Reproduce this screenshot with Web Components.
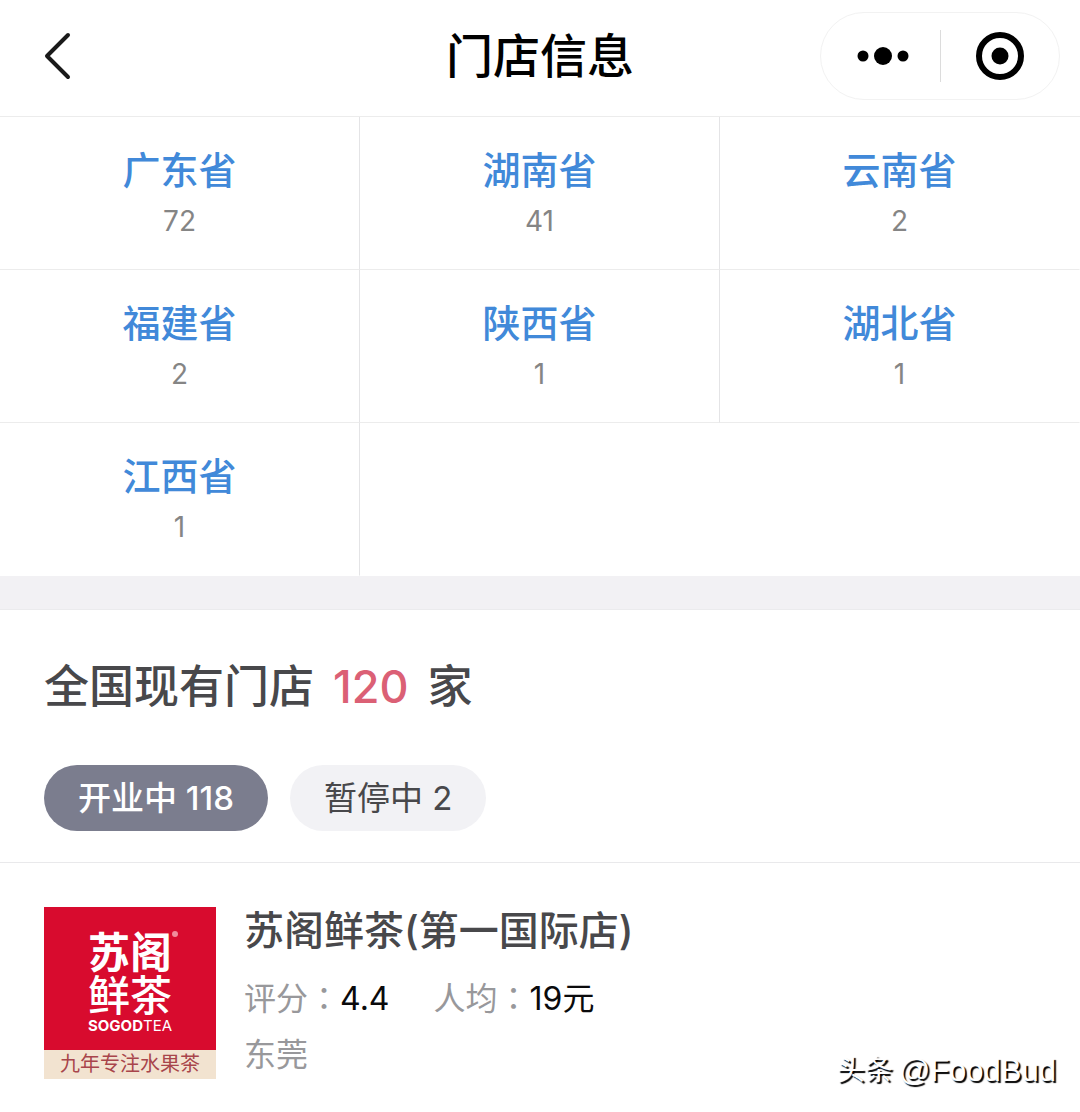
<!DOCTYPE html>
<html lang="zh-CN">
<head>
<meta charset="utf-8">
<meta name="viewport" content="width=device-width, initial-scale=1">
<title>门店信息</title>
<style>
  body {
    margin: 0;
    background: #fff;
    color: #48484b;
    font-family: Inter, "Noto Sans CJK SC", sans-serif;
  }
</style>
</head>
<body>
<store-page>
  <nav-bar slot="header">门店信息</nav-bar>
  <province-grid slot="provinces">
    <province-cell count="72">广东省</province-cell>
    <province-cell count="41">湖南省</province-cell>
    <province-cell count="2">云南省</province-cell>
    <province-cell count="2">福建省</province-cell>
    <province-cell count="1">陕西省</province-cell>
    <province-cell count="1">湖北省</province-cell>
    <province-cell count="1">江西省</province-cell>
  </province-grid>
  <store-summary total="120">
    <filter-pill active>开业中 118</filter-pill>
    <filter-pill>暂停中 2</filter-pill>
  </store-summary>
  <store-card score="4.4" price="19元" city="东莞">
    <brand-logo slot="logo"></brand-logo>
    苏阁鲜茶(第一国际店)
  </store-card>
  <water-mark slot="mark" source="头条">@FoodBud</water-mark>
</store-page>

<script>
function define(name, render) {
  customElements.define(name, class extends HTMLElement {
    constructor() {
      super();
      this.attachShadow({mode: 'open'});
    }
    connectedCallback() {
      this.shadowRoot.innerHTML = render(this);
    }
  });
}

define('store-page', () => `
  <style>
    :host { display: block; position: relative; }
    .band { height: 33px; background: #f2f1f4; border-bottom: 1px solid #ebebed; }
  </style>
  <slot name="header"></slot>
  <slot name="provinces"></slot>
  <div class="band"></div>
  <main><slot></slot></main>
  <slot name="mark"></slot>`);

define('nav-bar', () => `
  <style>
    :host {
      display: grid;
      grid-template-columns: 1fr auto 1fr;
      align-items: center;
      height: 117px;
      box-sizing: border-box;
      padding: 0 20px 5px;
      border-bottom: 1px solid #ececec;
    }
    h1 { margin: 0; font-size: 47px; line-height: 66px; font-weight: 500; color: #000; }
    button { display: flex; align-items: center; justify-content: center; border: 0; padding: 0; background: none; }
    .back { justify-self: start; padding: 0 24px; }
    .capsule {
      justify-self: end;
      display: flex;
      align-items: center;
      width: 240px;
      height: 88px;
      box-sizing: border-box;
      border: 1px solid #f2f2f2;
      border-radius: 44px;
    }
    .capsule button { flex: 1; height: 100%; }
    .more svg { margin-left: 6px; }
    .line { width: 1px; height: 52px; background: #dcdcdc; }
    svg { display: block; }
  </style>
  <button class="back" aria-label="返回">
    <svg width="28" height="48" viewBox="0 0 28 48" fill="none" stroke="#1a1a1a" stroke-width="4" stroke-linecap="round" stroke-linejoin="round"><path d="M24 3 L3 24 L24 45"/></svg>
  </button>
  <h1><slot></slot></h1>
  <div class="capsule">
    <button class="more" aria-label="更多">
      <svg width="54" height="20" viewBox="0 0 54 20"><circle cx="7" cy="10" r="5.5"/><circle cx="27" cy="10" r="9"/><circle cx="47" cy="10" r="5.5"/></svg>
    </button>
    <span class="line"></span>
    <button aria-label="关闭">
      <svg width="50" height="50" viewBox="0 0 50 50"><circle cx="25" cy="25" r="21" fill="none" stroke="#000" stroke-width="6"/><circle cx="25" cy="25" r="8.5"/></svg>
    </button>
  </div>`);

define('province-grid', () => `
  <style>
    :host { display: grid; grid-template-columns: repeat(3, 1fr); }
    ::slotted(*) { border-bottom: 1px solid #ececec; }
    ::slotted(:nth-child(3n)) { --divider: transparent; }
    ::slotted(:last-child) { border-bottom-color: transparent; }
  </style>
  <slot></slot>`);

define('province-cell', el => `
  <style>
    :host { display: block; border-right: 1px solid var(--divider, #e4e4e6); }
    a {
      display: flex;
      flex-direction: column;
      align-items: center;
      gap: 8px;
      padding: 28px 0 30px;
      text-decoration: none;
    }
    .name { font-size: 38px; line-height: 50px; font-weight: 500; color: #4189d9; }
    .count { font-size: 28px; line-height: 36px; color: #858585; }
  </style>
  <a href="#"><span class="name"><slot></slot></span><span class="count">${el.getAttribute('count')}</span></a>`);

define('store-summary', el => `
  <style>
    :host { display: block; padding: 44px 44px 31px; border-bottom: 1px solid #e9e9eb; }
    h2 {
      display: flex;
      gap: 19px;
      margin: 0 0 45px;
      font-size: 45px;
      line-height: 66px;
      font-weight: 500;
    }
    strong { font-weight: 500; color: #db6075; }
    .filters { display: flex; gap: 22px; }
  </style>
  <h2><span>全国现有门店</span><strong>${el.getAttribute('total')}</strong><span>家</span></h2>
  <div class="filters"><slot></slot></div>`);

define('filter-pill', () => `
  <style>
    :host { display: block; }
    button {
      display: block;
      height: 66px;
      padding: 0 34px;
      border: 0;
      border-radius: 33px;
      background: #f2f2f5;
      color: #48484b;
      font: inherit;
      font-size: 33px;
      line-height: 66px;
    }
    :host([active]) button { background: #7b7d8e; color: #fff; font-weight: 500; }
  </style>
  <button><slot></slot></button>`);

define('store-card', el => `
  <style>
    :host { display: flex; gap: 28px; padding: 44px 44px 34px; }
    h3 { margin: 0; font-size: 40px; line-height: 48px; font-weight: 500; }
    .info { display: flex; gap: 44px; margin: 17px 0 8px; }
    p { margin: 0; font-size: 32px; line-height: 48px; color: #98989b; }
    b { font-weight: 400; color: #0a0a0c; }
    /* the TC face centres the full-width colon */
    i { font-style: normal; font-family: "Noto Sans CJK TC", sans-serif; }
  </style>
  <slot name="logo"></slot>
  <div>
    <h3><slot></slot></h3>
    <div class="info">
      <p>评分<i lang="zh-TW">：</i><b>${el.getAttribute('score')}</b></p>
      <p>人均<i lang="zh-TW">：</i><b>${el.getAttribute('price')}</b></p>
    </div>
    <p>${el.getAttribute('city')}</p>
  </div>`);

define('brand-logo', () => `
  <style>
    :host {
      display: flex;
      flex-direction: column;
      flex: none;
      width: 172px;
      height: 172px;
      background: #d80b2e;
      color: #fff;
      text-align: center;
    }
    .mark { flex: 1; padding-top: 24px; font-size: 42px; line-height: 43px; font-weight: 500; }
    .top { display: flex; justify-content: center; font-weight: 700; }
    .dot { width: 6px; height: 6px; margin: 0 -6px 0 0; border-radius: 3px; background: #f08c9b; }
    .latin { font-size: 15px; line-height: 18px; font-weight: 700; }
    .latin span { font-weight: 400; }
    .tag { background: #f2e3d0; color: #a8454b; font-size: 20px; line-height: 29px; }
  </style>
  <div class="mark">
    <div class="top">苏阁<span class="dot"></span></div>
    <div>鲜茶</div>
    <div class="latin">SOGOD<span>TEA</span></div>
  </div>
  <div class="tag">九年专注水果茶</div>`);

define('water-mark', el => `
  <style>
    :host {
      position: absolute;
      right: 24px;
      bottom: 22px;
      display: flex;
      gap: 6px;
      font-family: "Liberation Sans", "Noto Sans CJK SC", sans-serif;
      font-size: 31px;
      line-height: 40px;
      color: #fff;
      text-shadow: 2px 2px 1px #000;
    }
    .source { font-size: 28px; }
  </style>
  <span class="source">${el.getAttribute('source')}</span>
  <span><slot></slot></span>`);
</script>
</body>
</html>
